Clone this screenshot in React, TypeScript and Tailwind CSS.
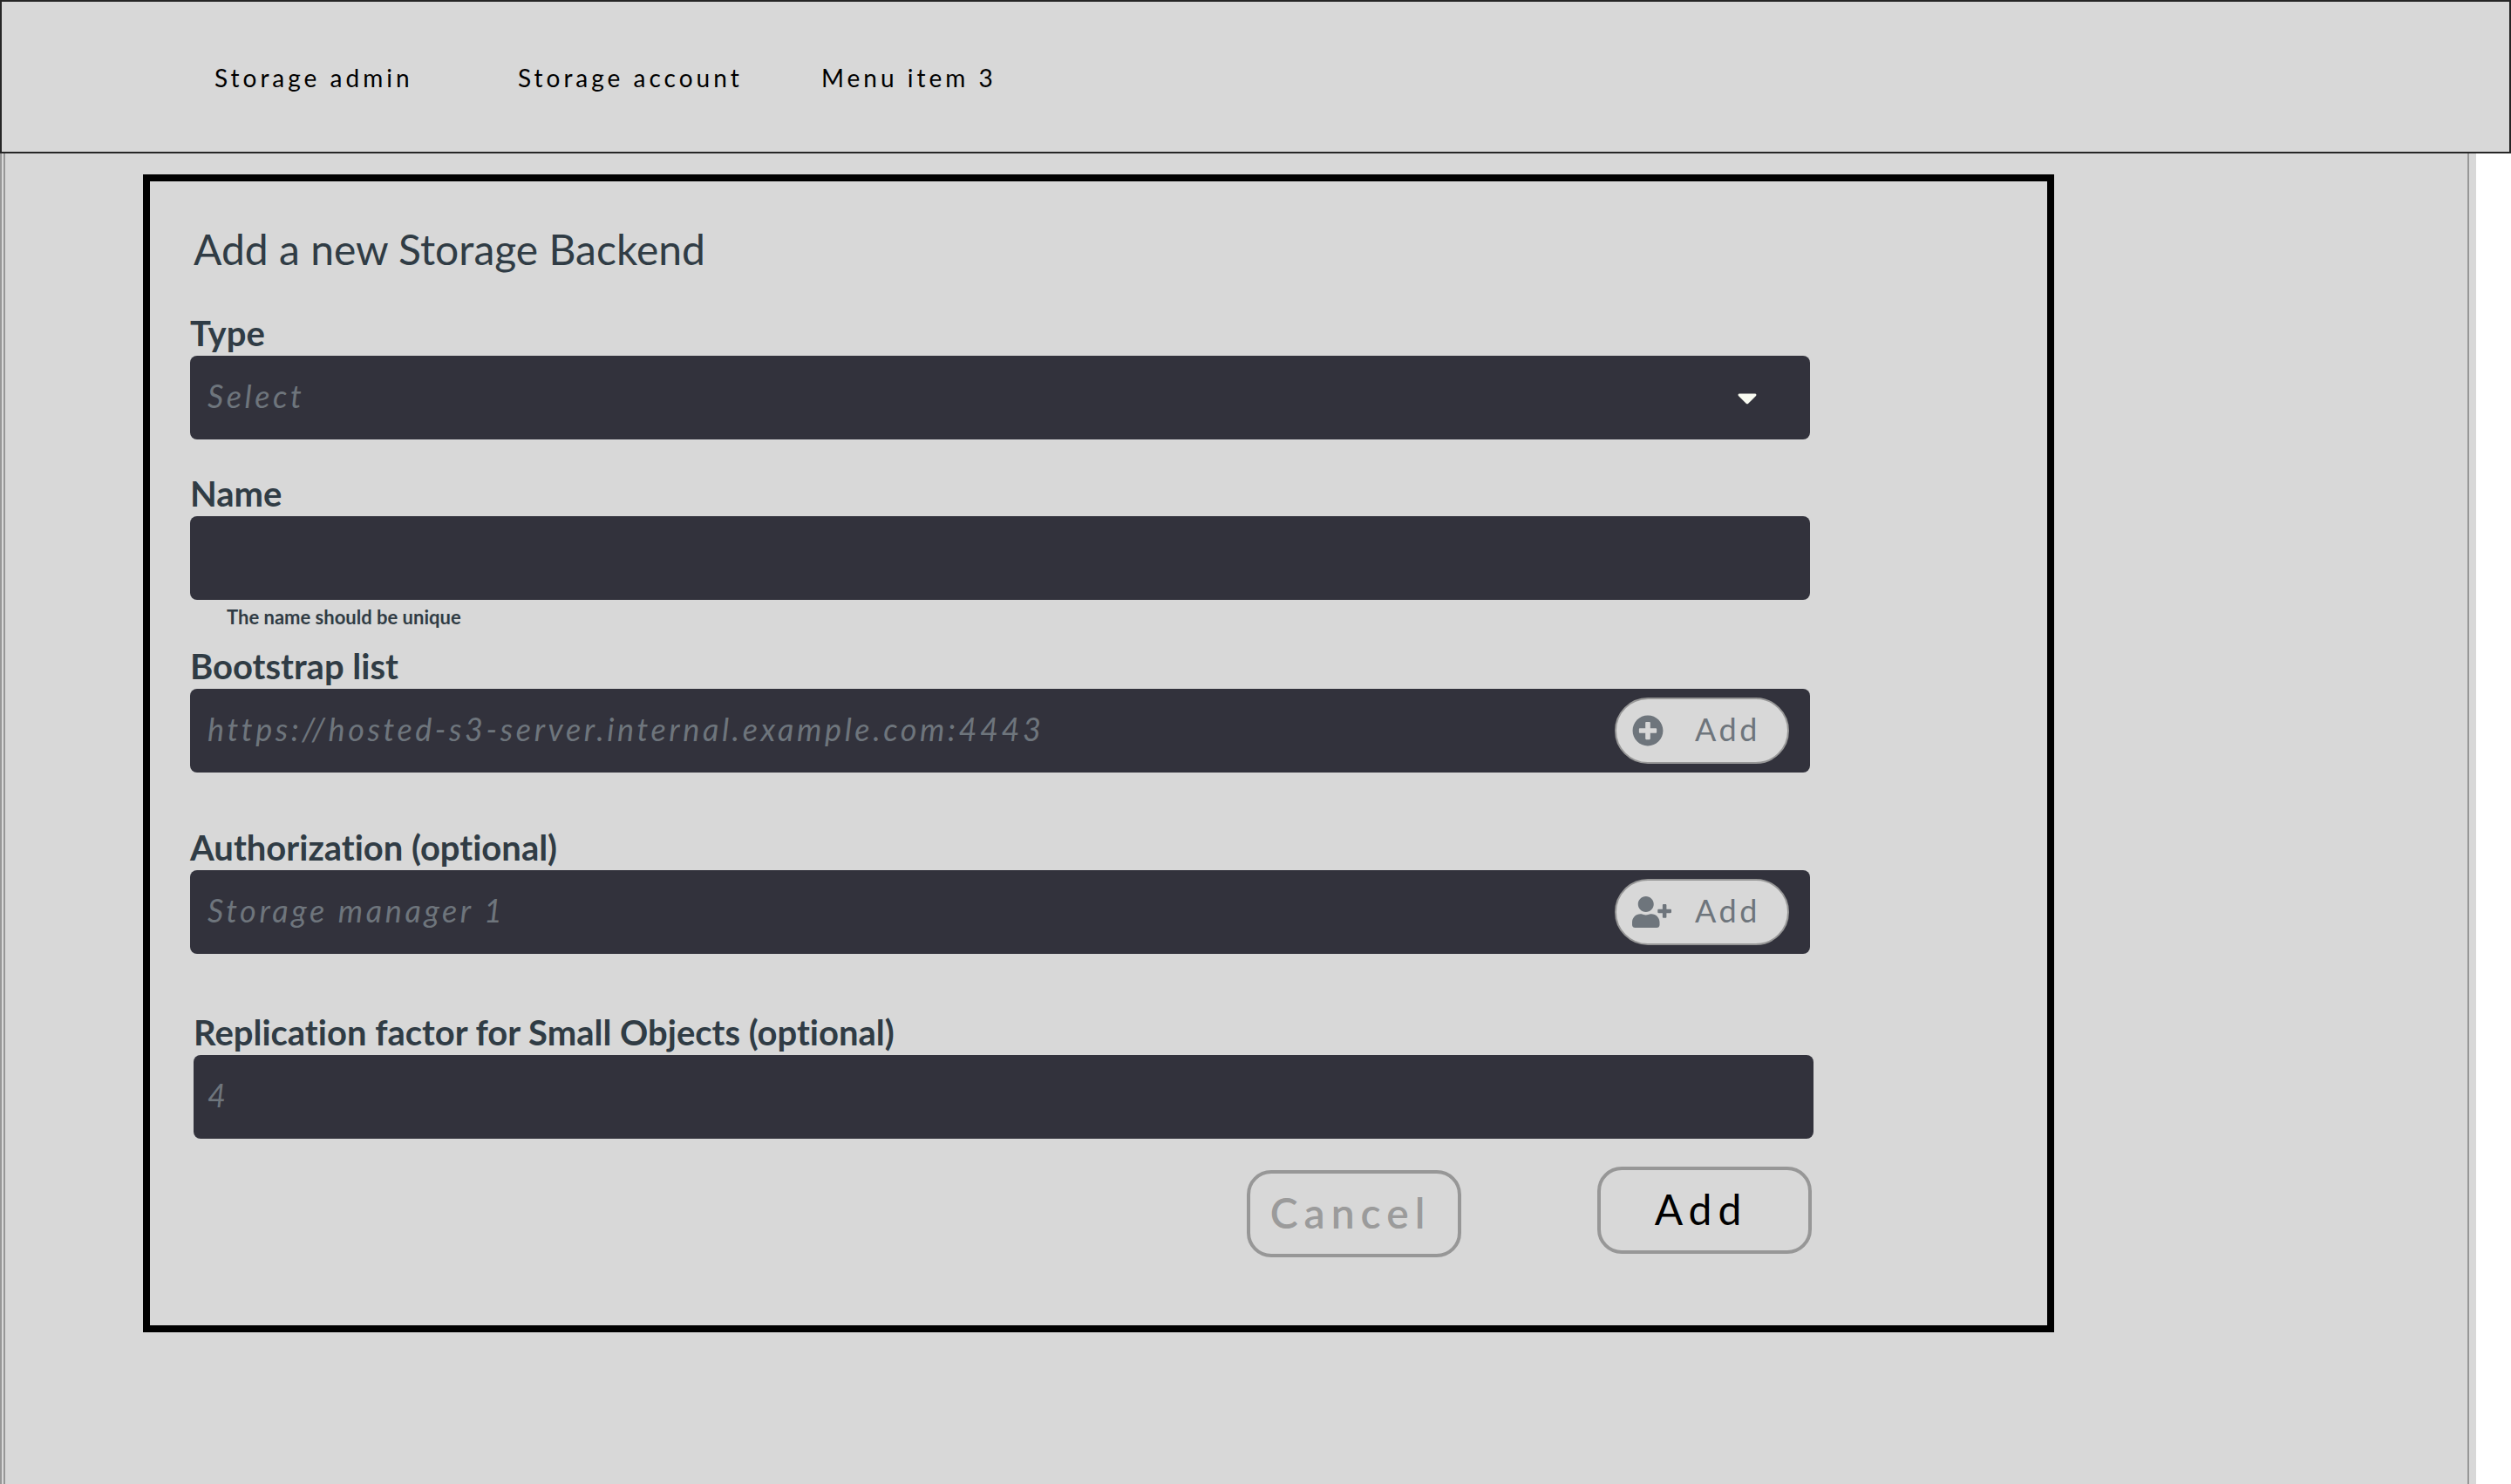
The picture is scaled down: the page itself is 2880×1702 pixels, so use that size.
import type { InputHTMLAttributes, ReactNode } from "react";
import { FaCaretDown, FaPlusCircle, FaUserPlus } from "react-icons/fa";

const menu = ["Storage admin", "Storage account", "Menu item 3"];

function Field({
  id,
  label,
  className = "",
  children,
}: {
  id: string;
  label: string;
  className?: string;
  children: ReactNode;
}) {
  return (
    <div className={`flex flex-col ${className}`}>
      <label htmlFor={id} className="text-[40px] leading-[52px] font-bold">
        {label}
      </label>
      <div className="relative flex h-24 items-center rounded-lg bg-[#32323c]">{children}</div>
    </div>
  );
}

function TextInput({ className = "pl-5", ...rest }: InputHTMLAttributes<HTMLInputElement>) {
  return (
    <input
      type="text"
      {...rest}
      className={`h-full min-w-0 flex-1 rounded-lg bg-transparent pb-1 text-4xl tracking-widest text-[#d8d8d8] placeholder:text-[#6e757c] placeholder:italic placeholder:opacity-100 ${className}`}
    />
  );
}

function PillButton({ icon }: { icon: ReactNode }) {
  return (
    <button
      type="button"
      className="mr-6 flex h-19 w-[200px] items-center rounded-full border-2 border-[#979797] bg-[#d8d8d8] pl-[18px] text-4xl tracking-widest text-[#6e757c]"
    >
      <span className="w-[72px]">{icon}</span>
      <span className="pb-1">Add</span>
    </button>
  );
}

export default function App() {
  return (
    <div className="flex min-h-screen flex-col bg-white font-['Lato',sans-serif] text-[#303c45] [font-variant-ligatures:none]">
      <header className="flex h-44 items-center border-2 border-[#262626] bg-[#d8d8d8] pt-0.5 pl-[244px] text-black">
        <nav className="flex">
          {menu.map((item) => (
            <a key={item} href="#" className="w-[348px] text-[28px] leading-9 tracking-[4px]">
              {item}
            </a>
          ))}
        </nav>
      </header>

      <div className="mr-10 flex flex-1 border-l-2 border-[#979797] bg-[#d8d8d8] pr-2 pl-0.5">
        <main className="flex flex-1 items-start border-x-2 border-[#979797] pt-6 pr-[474px] pb-12 pl-[158px]">
          <form className="flex flex-1 flex-col border-8 border-black pt-12 pr-[268px] pb-[78px] pl-[46px]">
            <h1 className="ml-1 text-5xl leading-[60px]">Add a new Storage Backend</h1>

            <Field id="type" label="Type" className="mt-10 mr-1">
              <select
                id="type"
                defaultValue=""
                className="h-full flex-1 appearance-none rounded-lg bg-transparent pb-1 pl-5 text-4xl tracking-widest text-[#6e757c] italic"
              >
                <option value="">Select</option>
              </select>
              <FaCaretDown className="pointer-events-none absolute right-[54px] size-9 text-[#f9fbf2]" />
            </Field>

            <Field id="name" label="Name" className="mt-9 mr-1">
              <TextInput id="name" aria-describedby="name-hint" />
            </Field>
            <p id="name-hint" className="mt-1.5 ml-[42px] text-[22px] leading-7 font-bold">
              The name should be unique
            </p>

            <Field id="bootstrap" label="Bootstrap list" className="mt-4 mr-1">
              <TextInput id="bootstrap" placeholder="https://hosted-s3-server.internal.example.com:4443" />
              <PillButton icon={<FaPlusCircle className="size-9" />} />
            </Field>

            <Field id="authorization" label="Authorization (optional)" className="mt-15 mr-1">
              <TextInput id="authorization" placeholder="Storage manager 1" />
              <PillButton icon={<FaUserPlus className="h-9 w-[45px]" />} />
            </Field>

            <Field
              id="replication"
              label="Replication factor for Small Objects (optional)"
              className="mt-16 ml-1"
            >
              <TextInput id="replication" placeholder="4" className="pl-4" />
            </Field>

            <div className="mt-8 flex items-start justify-end gap-[156px] pr-0.5">
              <button
                type="button"
                className="mt-1 h-25 w-[246px] rounded-[28px] border-4 border-[#979797] pr-2 pb-0.5 text-5xl font-semibold tracking-[7px] text-[#9b9b9b]"
              >
                Cancel
              </button>
              <button
                type="submit"
                className="h-25 w-[246px] rounded-[28px] border-4 border-[#979797] pr-2 pb-0.5 text-5xl tracking-[7px] text-black"
              >
                Add
              </button>
            </div>
          </form>
        </main>
      </div>
    </div>
  );
}
